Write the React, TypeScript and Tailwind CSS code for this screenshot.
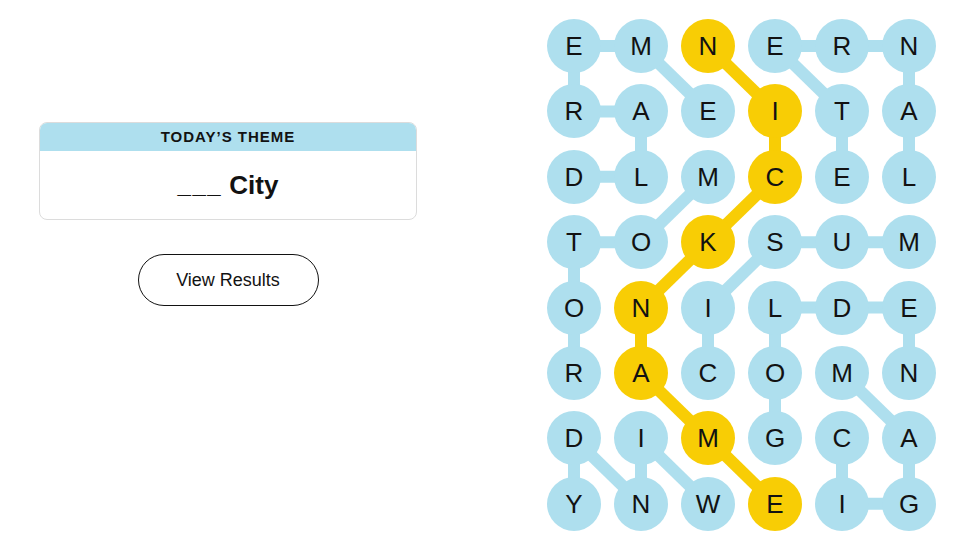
import React from "react";

const BLUE = "#aedfee";
const GOLD = "#f8cd05";

const LETTERS = [
  "EMNERN",
  "RAEITA",
  "DLMCEL",
  "TOKSUM",
  "ONILDE",
  "RACOMN",
  "DIMGCA",
  "YNWEIG",
];

// [col, row] pairs
const SPANGRAM: [number, number][] = [
  [2, 0], [3, 1], [3, 2], [2, 3], [1, 4], [1, 5], [2, 6], [3, 7],
];

const LINKS: [number, number, number, number][] = [
  [0, 0, 1, 0], [0, 0, 0, 1], [1, 0, 2, 1], [0, 1, 1, 1], [1, 1, 1, 2], [0, 2, 1, 2],
  [3, 0, 4, 0], [3, 0, 4, 1], [4, 0, 5, 0], [5, 0, 5, 1], [5, 1, 5, 2], [4, 1, 4, 2],
  [2, 2, 1, 3], [0, 3, 1, 3], [0, 3, 0, 4], [0, 4, 0, 5],
  [3, 3, 4, 3], [4, 3, 5, 3], [3, 3, 2, 4], [2, 4, 2, 5],
  [3, 4, 4, 4], [4, 4, 5, 4], [3, 4, 3, 5], [5, 4, 5, 5], [3, 5, 3, 6], [4, 5, 5, 6],
  [0, 6, 0, 7], [0, 6, 1, 7], [1, 6, 1, 7], [1, 6, 2, 7],
  [4, 6, 4, 7], [5, 6, 5, 7], [4, 7, 5, 7],
];

const cx = (c: number) => 27 + c * 67;
const cy = (r: number) => 27 + r * 65.4;

const isGold = (c: number, r: number) => SPANGRAM.some(([a, b]) => a === c && b === r);

function Board() {
  return (
    <div className="relative mt-[19px] ml-[130px] w-[389px] h-[512px]">
      <svg className="absolute inset-0" width={389} height={512}>
        {LINKS.map(([c1, r1, c2, r2], i) => (
          <line key={i} x1={cx(c1)} y1={cy(r1)} x2={cx(c2)} y2={cy(r2)} stroke={BLUE} strokeWidth={12} />
        ))}
        {SPANGRAM.slice(1).map(([c, r], i) => {
          const [pc, pr] = SPANGRAM[i];
          return <line key={i} x1={cx(pc)} y1={cy(pr)} x2={cx(c)} y2={cy(r)} stroke={GOLD} strokeWidth={12} />;
        })}
      </svg>
      <div className="relative grid grid-cols-[repeat(6,54px)] grid-rows-[repeat(8,54px)] gap-x-[13px] gap-y-[11.4px]">
        {LETTERS.map((row, r) =>
          row.split("").map((ch, c) => (
            <div
              key={`${r}-${c}`}
              className={`w-[54px] h-[54px] rounded-full flex items-center justify-center text-[26px] leading-none text-[#121212] ${
                isGold(c, r) ? "bg-[#f8cd05]" : "bg-[#aedfee]"
              }`}
            >
              {ch}
            </div>
          ))
        )}
      </div>
    </div>
  );
}

export default function App() {
  return (
    <div
      className="w-[958px] h-[557px] bg-white flex overflow-hidden"
      style={{ fontFamily: '"Liberation Sans", Arial, sans-serif' }}
    >
      <div className="ml-[39px] pt-[122px] w-[378px] flex flex-col items-center shrink-0">
        <div className="w-full rounded-lg border border-[#dcdcdc] overflow-hidden">
          <div className="h-[28px] bg-[#aedfee] flex items-center justify-center text-[15px] font-bold tracking-[1px] text-[#121212]">
            TODAY’S THEME
          </div>
          <div className="h-[68px] flex items-center justify-center text-[26px] font-bold text-[#121212]">
            <span className="tracking-[1.5px] text-[24px]">___</span>
            <span>&nbsp;City</span>
          </div>
        </div>
        <button className="mt-[34px] w-[181px] h-[52px] rounded-full border border-[#121212] text-[18px] text-[#121212] bg-white">
          View Results
        </button>
      </div>
      <Board />
    </div>
  );
}
